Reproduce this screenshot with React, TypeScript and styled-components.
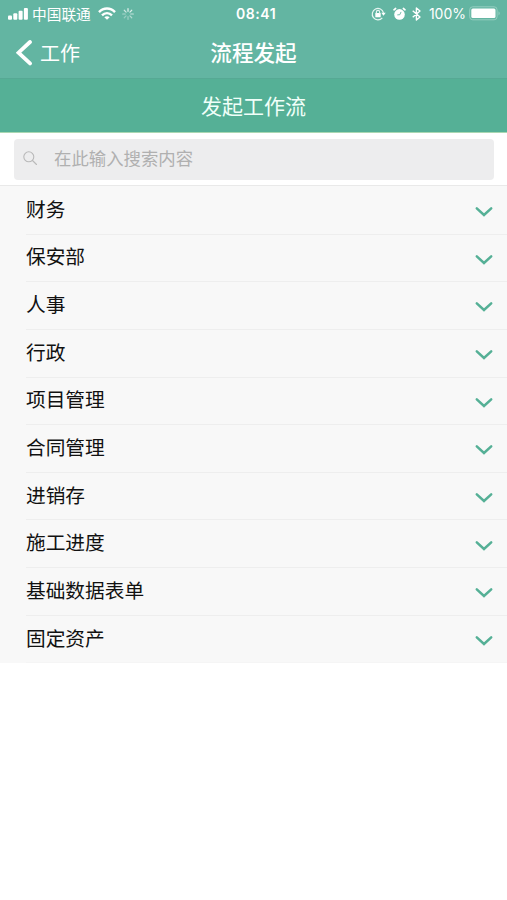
import React from "react";
import styled, { createGlobalStyle } from "styled-components";

const GlobalStyle = createGlobalStyle`
  * { box-sizing: border-box; }
  body { margin: 0; background: #fff; font-family: "Noto Sans CJK SC", sans-serif; }
`;

const Page = styled.div`
  width: 100%;
  max-width: 507px;
  min-height: 900px;
  background: #fff;
`;

const Header = styled.header`
  height: 79px;
  background: #63b5a2;
  border-bottom: 1px solid #56a994;
  color: #fff;
`;

const StatusBar = styled.div`
  height: 27px;
  padding: 0 6px 0 8px;
  display: grid;
  grid-template-columns: 1fr auto 1fr;
  align-items: center;
`;

const StatusGroup = styled.div<{ $end?: boolean }>`
  display: flex;
  align-items: center;
  justify-content: ${(p) => (p.$end ? "flex-end" : "flex-start")};
  svg { display: block; flex: none; }
`;

const Carrier = styled.span`
  margin: 0 7px 0 4px;
  font-size: 14.7px;
  line-height: 26px;
`;

const Clock = styled.span`
  padding-left: 3px;
  font: 600 14px/27px Inter, sans-serif;
  letter-spacing: 0.55px;
`;

const Percent = styled.span`
  margin: 0 3px 0 8px;
  font: 400 14px/27px Inter, sans-serif;
`;

const Spinner = styled.svg`
  margin-left: 6px;
`;

const NavBar = styled.nav`
  height: 51px;
  padding: 0 16px;
  display: grid;
  grid-template-columns: 1fr auto 1fr;
  align-items: center;
`;

const Back = styled.a`
  display: flex;
  align-items: center;
  gap: 7px;
  font-size: 20px;
  line-height: 50px;
`;

const Title = styled.h1`
  margin: 0;
  font-size: 21.6px;
  font-weight: 500;
  line-height: 48px;
  padding-bottom: 2px;
`;

const Banner = styled.div`
  height: 54px;
  background: #55b096;
  border-bottom: 1px solid #a9d7b2;
  color: #f0fff9;
  text-align: center;
  font-size: 21px;
  line-height: 52px;
`;

const SearchArea = styled.div`
  height: 53px;
  padding: 6px 13px 5px 14px;
  border-bottom: 1px solid #e9e9e9;
`;

const SearchBox = styled.label`
  height: 41px;
  border-radius: 4px;
  background: #ededee;
  display: flex;
  align-items: center;
  padding: 0 9px 2px;
  gap: 16px;
`;

const SearchInput = styled.input`
  flex: 1;
  height: 39px;
  padding: 0 0 2px;
  border: 0;
  outline: 0;
  background: transparent;
  font: 17.4px "Noto Sans CJK SC", sans-serif;
  &::placeholder { color: #b0b0b0; opacity: 1; }
`;

const List = styled.ul`
  margin: 0;
  padding: 1px 0 0;
  list-style: none;
  background: #f8f8f8;
`;

const Row = styled.li`
  height: 47.65px;
  padding-left: 26px;
`;

const RowBody = styled.div<{ $last: boolean }>`
  height: 100%;
  padding-right: 14px;
  border-bottom: 1px solid ${(p) => (p.$last ? "#f5f5f5" : "#eeeeee")};
  display: flex;
  align-items: center;
  justify-content: space-between;
`;

const RowLabel = styled.span`
  color: #111;
  font-size: 19.7px;
  line-height: 28px;
  margin-bottom: 3px;
`;

const Chevron = styled.svg`
  margin-top: 3.5px;
`;

const categories = ["财务", "保安部", "人事", "行政", "项目管理", "合同管理", "进销存", "施工进度", "基础数据表单", "固定资产"];

const Signal = () => (
  <svg width="20" height="14" viewBox="0 0 20 14" fill="#fff">
    <rect x="0" y="8.5" width="4" height="4.3" rx="1" />
    <rect x="5.3" y="6.2" width="4" height="6.6" rx="1" />
    <rect x="10.6" y="3.8" width="4" height="9" rx="1" />
    <rect x="15.9" y="1" width="4" height="11.8" rx="1" />
  </svg>
);

const Wifi = () => (
  <svg width="18" height="14" viewBox="0 0 18 14" fill="none" stroke="#fff" strokeWidth="2.4">
    <path d="M1 5.1C5.5.3 12.5.3 17 5.1" />
    <path d="M4 8.3c2.9-2.9 7.1-2.9 10 0" />
    <path d="M6.3 10.2c1.6-1.4 3.8-1.4 5.4 0L9 12.8Z" fill="#fff" stroke="none" />
  </svg>
);

const Loading = () => (
  <Spinner width="12" height="12" viewBox="-6 -6 12 12" stroke="#fff" strokeWidth="1.2" strokeLinecap="round">
    {[1, 0.9, 0.75, 0.6, 0.45, 0.4, 0.55, 0.8].map((o, i) => (
      <path key={i} d="M0-5.3V-2.7" opacity={o * 0.85} transform={`rotate(${i * 45})`} />
    ))}
  </Spinner>
);

const RotationLock = () => (
  <svg width="15" height="14" viewBox="0 0 15 14" fill="none" stroke="#e6f5f1" strokeWidth="1.2">
    <path d="M12.5 5.8A5.7 5.7 0 1 0 11.3 10.8" />
    <path d="M10.3 5.7h4.4l-2.2 3Z" fill="#fff" stroke="none" />
    <rect x="4.3" y="6.1" width="5.4" height="4.1" rx=".5" fill="#fff" stroke="none" />
    <path d="M5.4 6.4V5a1.6 1.6 0 0 1 3.2 0v1.4" />
  </svg>
);

const Alarm = () => (
  <svg width="13" height="14" viewBox="0 0 13 14">
    <circle cx="6.5" cy="7.4" r="5.3" fill="#fff" />
    <path d="M1 2.8 2.6 1.5M12 2.8 10.4 1.5" stroke="#fff" strokeWidth="1.7" strokeLinecap="round" />
    <path d="M8.1 4.9 6.8 7.7 4.3 7.9" fill="none" stroke="#63b5a2" strokeWidth="0.9" />
  </svg>
);

const Bluetooth = () => (
  <svg width="9" height="14" viewBox="0 0 9 14" fill="none" stroke="#fff" strokeWidth="1.4" strokeLinejoin="round">
    <path d="M.7 3.8 8 10 4.4 13V1L8 4 .7 10.2" />
  </svg>
);

const Battery = () => (
  <svg width="32" height="15" viewBox="0 0 32 15">
    <rect x=".7" y=".8" width="27.4" height="13" rx="3" fill="none" stroke="#94cec0" strokeWidth="1" />
    <rect x="2.3" y="2.5" width="24.2" height="9.6" rx="1.5" fill="#fff" />
    <path d="M29.5 5.2c1.7.8 1.7 3.4 0 4.2Z" fill="#94cec0" />
  </svg>
);

const IconGap = styled.i<{ $w: number }>`
  width: ${(p) => p.$w}px;
`;

export default function App() {
  return (
    <Page>
      <GlobalStyle />
      <Header>
        <StatusBar>
          <StatusGroup>
            <Signal />
            <Carrier>中国联通</Carrier>
            <Wifi />
            <Loading />
          </StatusGroup>
          <Clock>08:41</Clock>
          <StatusGroup $end>
            <RotationLock />
            <IconGap $w={7} />
            <Alarm />
            <IconGap $w={6} />
            <Bluetooth />
            <Percent>100%</Percent>
            <Battery />
          </StatusGroup>
        </StatusBar>
        <NavBar>
          <Back>
            <svg width="17" height="26" viewBox="0 0 17 26" fill="none" stroke="#fff" strokeWidth="3.8" strokeLinecap="round">
              <path d="M14 2 2.5 12.7 14 23.4" />
            </svg>
            工作
          </Back>
          <Title>流程发起</Title>
        </NavBar>
      </Header>
      <Banner>发起工作流</Banner>
      <SearchArea>
        <SearchBox>
          <svg width="15" height="15" viewBox="0 0 15 15" fill="none" stroke="#b9b9b9" strokeWidth="1.1" strokeLinecap="round">
            <circle cx="5.8" cy="5.8" r="5" />
            <path d="m9.5 9.5 4 4" />
          </svg>
          <SearchInput placeholder="在此输入搜索内容" />
        </SearchBox>
      </SearchArea>
      <List>
        {categories.map((name, i) => (
          <Row key={name}>
            <RowBody $last={i === categories.length - 1}>
              <RowLabel>{name}</RowLabel>
              <Chevron width="18" height="12" viewBox="0 0 18 12" fill="none" stroke="#55b096" strokeWidth="2.5" strokeLinecap="round">
                <path d="M1.8 2.3 9 9l7.2-6.7" />
              </Chevron>
            </RowBody>
          </Row>
        ))}
      </List>
    </Page>
  );
}
